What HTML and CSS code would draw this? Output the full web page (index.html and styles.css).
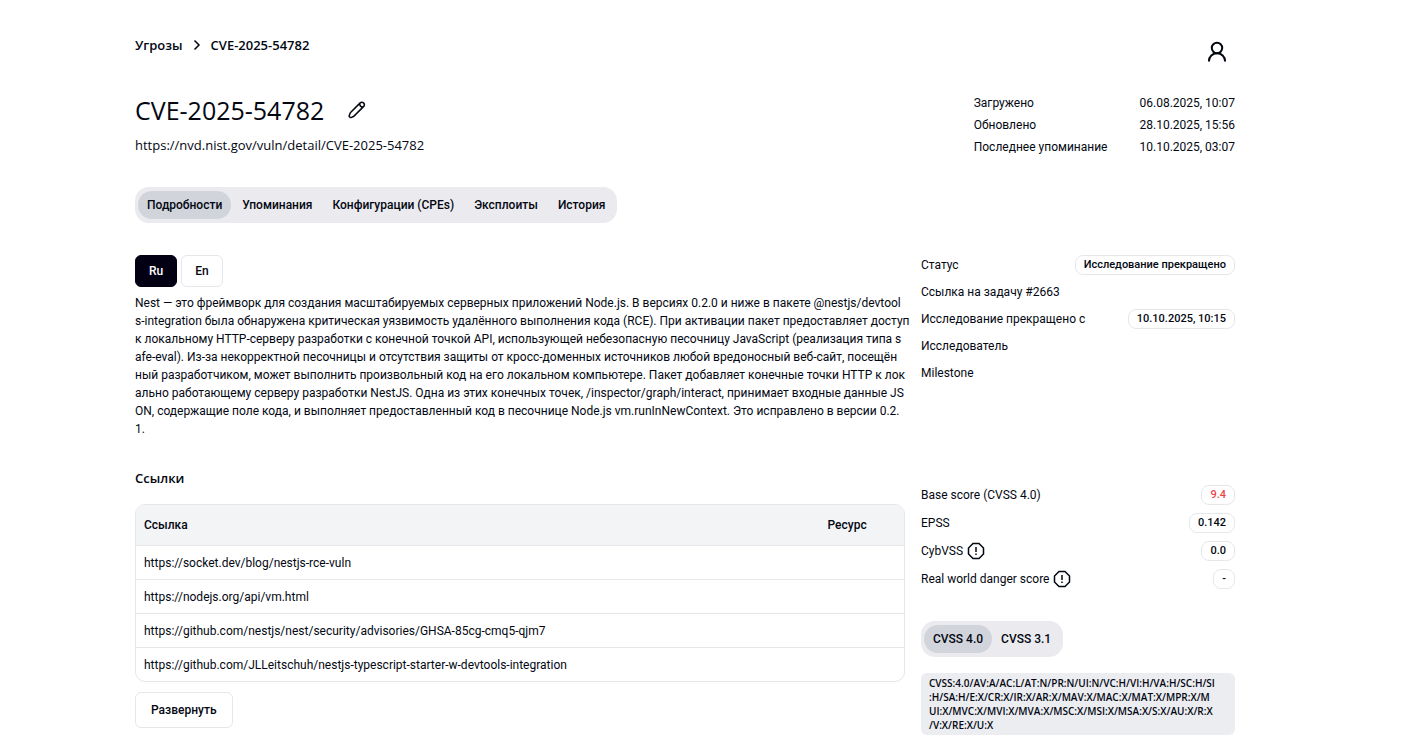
FILE: index.html
```html
<!DOCTYPE html>
<html lang="ru">
<head>
  <meta charset="UTF-8" />
  <meta name="viewport" content="width=device-width, initial-scale=1" />
  <title>CVE-2025-54782</title>
  <link rel="stylesheet" href="styles.css">
</head>
<body>
  <div class="page">
    <header class="topbar">
      <nav class="breadcrumbs">
        <a href="#">Угрозы</a>
        <svg class="chevron" viewBox="0 0 14 14"><path d="M4.500 2.500l4.500 4.500-4.500 4.500" /></svg>
        <a href="#">CVE-2025-54782</a>
      </nav>
      <button class="icon-button user" aria-label="Профиль">
        <svg viewBox="0 0 24 24"><circle cx="12" cy="8" r="5.2" /><path d="M4 21.5v-.8a8 7.500 0 0 1 16 0v.8" /></svg>
      </button>
    </header>

    <section class="heading">
      <div>
        <div class="title-row">
          <h1>CVE-2025-54782</h1>
          <button class="icon-button edit" aria-label="Редактировать">
            <svg viewBox="0 0 18 18"><path d="M2.300 11.800 12.200 1.900a2.300 2.300 0 0 1 3.300 0l.2.2a2.300 2.300 0 0 1 0 3.300L5.800 15.300 3.600 16.300a1.600 1.600 0 0 1-2.200-2.200z" /><path d="M11.500 2.800c.3 2 1.500 3.200 3.500 3.500" /></svg>
          </button>
        </div>
        <a class="source" href="#">https://nvd.nist.gov/vuln/detail/CVE-2025-54782</a>
      </div>
      <dl class="dates">
        <dt>Загружено</dt><dd>06.08.2025, 10:07</dd>
        <dt>Обновлено</dt><dd>28.10.2025, 15:56</dd>
        <dt>Последнее упоминание</dt><dd>10.10.2025, 03:07</dd>
      </dl>
    </section>

    <div class="tabs">
      <button class="tab active">Подробности</button>
      <button class="tab">Упоминания</button>
      <button class="tab">Конфигурации (CPEs)</button>
      <button class="tab">Эксплоиты</button>
      <button class="tab">История</button>
    </div>

    <main class="columns">
      <div class="details">
        <div class="langs">
          <button class="lang active">Ru</button>
          <button class="lang">En</button>
        </div>
        <p class="description">
          Nest — это фреймворк для создания масштабируемых серверных приложений Node.js. В версиях 0.2.0 и ниже в пакете @nestjs/devtool<br>
          s-integration была обнаружена критическая уязвимость удалённого выполнения кода (RCE). При активации пакет предоставляет доступ<br>
          к локальному HTTP-серверу разработки с конечной точкой API, использующей небезопасную песочницу JavaScript (реализация типа s<br>
          afe-eval). Из-за некорректной песочницы и отсутствия защиты от кросс-доменных источников любой вредоносный веб-сайт, посещён<br>
          ный разработчиком, может выполнить произвольный код на его локальном компьютере. Пакет добавляет конечные точки HTTP к лок<br>
          ально работающему серверу разработки NestJS. Одна из этих конечных точек, /inspector/graph/interact, принимает входные данные JS<br>
          ON, содержащие поле кода, и выполняет предоставленный код в песочнице Node.js vm.runInNewContext. Это исправлено в версии 0.2.<br>
          1.
        </p>

        <h2>Ссылки</h2>
        <div class="table-box">
          <table>
            <thead>
              <tr><th class="col-link">Ссылка</th><th>Ресурс</th></tr>
            </thead>
            <tbody>
              <tr><td><a href="#">https://socket.dev/blog/nestjs-rce-vuln</a></td><td></td></tr>
              <tr><td><a href="#">https://nodejs.org/api/vm.html</a></td><td></td></tr>
              <tr><td><a href="#">https://github.com/nestjs/nest/security/advisories/GHSA-85cg-cmq5-qjm7</a></td><td></td></tr>
              <tr><td><a href="#">https://github.com/JLLeitschuh/nestjs-typescript-starter-w-devtools-integration</a></td><td></td></tr>
            </tbody>
          </table>
        </div>
        <button class="expand">Развернуть</button>
      </div>

      <aside class="side">
        <dl class="props status">
          <div><dt>Статус</dt><dd class="badge">Исследование прекращено</dd></div>
          <div><dt><a href="#">Ссылка на задачу #2663</a></dt></div>
          <div><dt>Исследование прекращено с</dt><dd class="badge">10.10.2025, 10:15</dd></div>
          <div><dt>Исследователь</dt></div>
          <div><dt>Milestone</dt></div>
        </dl>

        <dl class="props">
          <div><dt>Base score (CVSS 4.0)</dt><dd class="badge critical">9.4</dd></div>
          <div><dt>EPSS</dt><dd class="badge">0.142</dd></div>
          <div>
            <dt>CybVSS <svg class="info" viewBox="0 0 18 18"><path d="M6 1.500h6L16.500 6v6L12 16.500H6L1.500 12V6z" /><path d="M9 5v5M9 11.500v1.500" /></svg></dt>
            <dd class="badge">0.0</dd>
          </div>
          <div>
            <dt>Real world danger score <svg class="info" viewBox="0 0 18 18"><path d="M6 1.500h6L16.500 6v6L12 16.500H6L1.500 12V6z" /><path d="M9 5v5M9 11.500v1.500" /></svg></dt>
            <dd class="badge">-</dd>
          </div>
        </dl>

        <div class="tabs">
          <button class="tab active">CVSS 4.0</button>
          <button class="tab">CVSS 3.1</button>
        </div>
        <div class="vector">
          CVSS:4.0/AV:A/AC:L/AT:N/PR:N/UI:N/VC:H/VI:H/VA:H/SC:H/SI<br>
          :H/SA:H/E:X/CR:X/IR:X/AR:X/MAV:X/MAC:X/MAT:X/MPR:X/M<br>
          UI:X/MVC:X/MVI:X/MVA:X/MSC:X/MSI:X/MSA:X/S:X/AU:X/R:X<br>
          /V:X/RE:X/U:X
        </div>
      </aside>
    </main>
  </div>
</body>
</html>
```
FILE: styles.css
```css
* { box-sizing: border-box; }
body {
  margin: 0;
  font-family: "Segoe UI", Roboto, "Open Sans", sans-serif;
  font-size: 12px;
  line-height: 18px;
  color: #030712;
  background: #fff;
}
a { color: inherit; text-decoration: none; }
h1, h2, p, dl, dd { margin: 0; }
button { font: inherit; color: inherit; cursor: pointer; }
svg { fill: none; stroke: currentColor; }

.page { padding: 36px 172px 12px 135px; }

.topbar { display: flex; justify-content: space-between; align-items: flex-start; }
.breadcrumbs { display: flex; align-items: center; gap: 7px; font-family: "Segoe UI", "Open Sans", sans-serif; font-size: 13px; font-weight: 600; }
.chevron { width: 14px; height: 14px; stroke-width: 1.5; }
.icon-button { display: flex; padding: 0; border: 0; background: none; }
.user { padding: 4px 6px; }
.user svg { width: 24px; height: 24px; stroke-width: 2; }

.heading { display: flex; justify-content: space-between; margin-top: 24px; font-family: "Segoe UI", "Open Sans", sans-serif; }
.title-row { display: flex; align-items: center; gap: 24px; }
h1 { font-size: 25px; font-weight: 400; line-height: 36px; }
.edit svg { width: 18px; height: 18px; stroke-width: 1.5; }
.source { display: block; margin-top: 8px; font-size: 13px; }
.dates { display: grid; grid-template-columns: auto auto; gap: 4px 32px; align-content: start; margin-top: 2px; font-family: "Segoe UI", Roboto, sans-serif; }
.dates dd { text-align: right; }

.tabs { display: inline-flex; gap: 2px; padding: 4px 3px; border-radius: 14px; background: #ebebef; }
.tab { padding: 5px 9px; border: 0; border-radius: 14px; background: none; font-weight: 500; }
.tab.active { background: #d1d5db; }
.page > .tabs { margin-top: 31px; }

.columns { display: grid; grid-template-columns: 7fr 3fr; margin-top: 32px; }
.details { min-width: 0; }
.langs { display: flex; gap: 4px; }
.lang { width: 42px; height: 32px; padding: 0; border: 1px solid #e5e7eb; border-radius: 6px; background: #fff; font-weight: 500; }
.lang.active { border-color: #030014; background: #030014; color: #fff; }
.description { margin-top: 7px; white-space: nowrap; }

h2 { margin: 30px 0 16px; font-family: "Segoe UI", "Open Sans", sans-serif; font-size: 13px; font-weight: 600; line-height: 20px; }
.table-box { overflow: hidden; border: 1px solid #e5e7eb; border-radius: 10px; }
table { width: 100%; border-collapse: collapse; }
th, td { padding: 8px 8px 7px; text-align: left; }
th { padding: 11px 8px; background: #f3f4f6; font-weight: 500; }
td { border-top: 1px solid #e5e7eb; }
.col-link { width: 89%; }
.expand { margin-top: 10px; padding: 8px 15px; border: 1px solid #e5e7eb; border-radius: 6px; background: #fff; font-weight: 500; }

.side { padding-left: 16px; }
.props { display: grid; gap: 8px; }
.props div { display: flex; justify-content: space-between; align-items: center; height: 20px; }
.props dt { display: flex; align-items: center; gap: 4px; }
.status { gap: 7px; margin-bottom: 102px; }
.badge { padding: 0 8px; border: 1px solid #e5e7eb; border-radius: 8px; font-size: 11px; font-weight: 500; }
.critical { color: #ef4444; }
.info { width: 18px; height: 18px; stroke-width: 1.5; }
.side .tabs { gap: 0; margin-top: 32px; }
.vector { margin-top: 16px; padding: 3px 8px; border-radius: 6px; background: #ebedf1; font-family: "Segoe UI", "Open Sans", sans-serif; font-size: 10px; font-weight: 600; line-height: 14px; white-space: nowrap; }
```
